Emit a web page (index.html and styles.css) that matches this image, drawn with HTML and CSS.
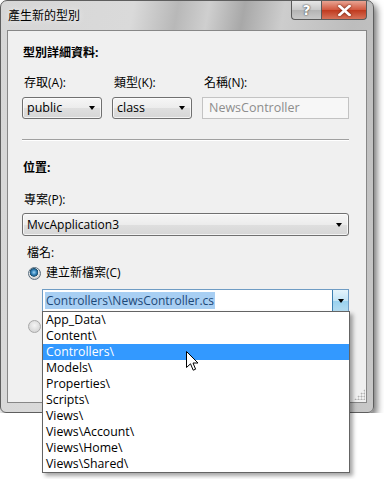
FILE: index.html
```html
<!DOCTYPE html>
<html lang="zh-Hant">
<head>
    <meta charset="UTF-8">
    <title>產生新的型別</title>
    <link rel="stylesheet" href="styles.css">
</head>
<body>
    <div class="window">
        <div class="titlebar">
            <span class="title">產生新的型別</span>
            <div class="caption-buttons">
                <span class="cap-btn help">?</span>
                <span class="cap-btn close">
                    <svg width="13" height="11" viewBox="0 0 13 11"><path d="M1.5 1 L11.5 10 M11.5 1 L1.5 10" stroke="#fff" stroke-width="2.6" stroke-linecap="square"/></svg>
                </span>
            </div>
        </div>

        <div class="client">
            <div class="section-title first">型別詳細資料:</div>
            <div class="field-row">
                <div class="field access">
                    <div class="label">存取(A):</div>
                    <div class="combo">public<i class="arrow"></i></div>
                </div>
                <div class="field kind">
                    <div class="label">類型(K):</div>
                    <div class="combo">class<i class="arrow"></i></div>
                </div>
                <div class="field name">
                    <div class="label">名稱(N):</div>
                    <div class="textbox">NewsController</div>
                </div>
            </div>

            <div class="separator"></div>

            <div class="section-title">位置:</div>
            <div class="label project-label">專案(P):</div>
            <div class="combo wide">MvcApplication3<i class="arrow"></i></div>

            <div class="label file-label">檔名:</div>
            <div class="radio-row">
                <span class="radio checked"></span>
                <span>建立新檔案(C)</span>
            </div>
            <div class="combo-edit">
                <span class="selected-text">Controllers\NewsController.cs</span>
                <span class="drop-btn"><i class="arrow"></i></span>
            </div>
            <div class="radio-row second">
                <span class="radio"></span>
            </div>

            <div class="grip"></div>
        </div>
    </div>

    <ul class="droplist">
        <li>App_Data\</li>
        <li>Content\</li>
        <li class="active">Controllers\</li>
        <li>Models\</li>
        <li>Properties\</li>
        <li>Scripts\</li>
        <li>Views\</li>
        <li>Views\Account\</li>
        <li>Views\Home\</li>
        <li>Views\Shared\</li>
    </ul>

    <svg class="cursor" width="13" height="21" viewBox="0 0 13 21">
        <path d="M0.5 0.5 L0.5 16.5 L4.5 12.8 L7.2 19.2 L9.6 18.2 L7 12 L12 12 Z" fill="#fff" stroke="#000" stroke-width="1" stroke-linejoin="miter"/>
    </svg>
</body>
</html>
```

FILE: styles.css
```css
body {
    margin: 0;
    background: #fff;
    font-family: "Open Sans", "Noto Sans CJK TC", sans-serif;
    font-size: 12px;
    color: #000;
}
.window {
    width: 372px;
    height: 411px;
    border: 1px solid #5e5e5e;
    border-radius: 7px 7px 6px 6px;
    background: linear-gradient(100deg, #d6d6d6 0%, #dadada 30%, #b8b8b8 40%, #cfcfcf 47%, #a8a8a8 55%, #cdcdcd 64%, #bdbdbd 80%, #c8c8c8 100%);
    box-shadow: 3px 4px 7px rgba(0, 0, 0, 0.55);
    display: flex;
    flex-direction: column;
}
.titlebar {
    height: 29px;
    display: flex;
    align-items: flex-start;
}
.title {
    padding-left: 7px;
    line-height: 29px;
    font-size: 12px;
    text-shadow: 0 0 6px rgba(255, 255, 255, 0.9);
}
.caption-buttons {
    margin-left: auto;
    margin-right: 6px;
    display: flex;
}
.cap-btn {
    height: 18px;
    display: flex;
    align-items: center;
    justify-content: center;
    border: 1px solid #5a5a5a;
    border-top: none;
}
.help {
    width: 29px;
    border-radius: 0 0 0 4px;
    border-right: none;
    background: linear-gradient(#e6e6e6, #c8c8c8 50%, #b4b4b4 51%, #c9c9c9);
    color: #fff;
    font-weight: bold;
    font-size: 14px;
    font-family: "DejaVu Sans", sans-serif;
    text-shadow: 0 0 2px #555, 0 0 1px #333;
}
.close {
    width: 44px;
    border-radius: 0 0 4px 0;
    background: linear-gradient(#e8a493, #d2573d 50%, #c0391e 51%, #d6735a);
}
.close svg {
    filter: drop-shadow(0 0 1px #5a1a0a);
}
.client {
    margin: 0 6px;
    height: 371px;
    border: 1px solid #878787;
    background: #f0f0f0;
    padding: 0 17px 0 14px;
    display: flex;
    flex-direction: column;
    line-height: 16px;
}
.section-title {
    font-weight: bold;
    margin: 19px 0 0 1px;
}
.section-title.first {
    margin-top: 14px;
}
.label {
    margin-left: 2px;
}
.field-row {
    display: flex;
    gap: 10px;
    margin-top: 14px;
}
.field .label {
    margin-bottom: 6px;
}
.access, .kind {
    width: 80px;
}
.name {
    flex: 1;
}
.combo {
    height: 20px;
    border: 1px solid #707070;
    border-radius: 3px;
    background: linear-gradient(#f6f6f6, #ececec 50%, #dfdfdf 51%, #d6d6d6);
    box-shadow: inset 0 0 0 1px rgba(255, 255, 255, 0.7);
    display: flex;
    align-items: center;
    justify-content: space-between;
    padding: 0 6px 0 4px;
    font-size: 12.5px;
}
.arrow {
    width: 0;
    height: 0;
    border-left: 3.5px solid transparent;
    border-right: 3.5px solid transparent;
    border-top: 4px solid #000;
}
.textbox {
    height: 20px;
    border: 1px solid #c3c3c3;
    background: #f7f7f7;
    color: #8d8d8d;
    padding-left: 6px;
    line-height: 20px;
    font-size: 12.5px;
}
.separator {
    margin-top: 20px;
    height: 1px;
    background: #a0a0a0;
    border-bottom: 1px solid #fff;
}
.project-label {
    margin-top: 16px;
}
.combo.wide {
    margin-top: 5px;
    height: 21px;
    font-size: 12px;
}
.file-label {
    margin: 9px 0 0 5px;
}
.radio-row {
    display: flex;
    align-items: center;
    gap: 5px;
    margin: 4px 0 0 6px;
}
.radio {
    width: 11px;
    height: 11px;
    border-radius: 50%;
    border: 1px solid #8e8f8f;
    background: radial-gradient(circle at 50% 40%, #ffffff, #d4d4d4);
}
.radio.checked {
    border-color: #5a6f80;
    background: radial-gradient(circle at 45% 40%, #9fd6f4 0, #2f7fb8 2.5px, #1c4f6e 4px, #eaeaea 4.6px, #cfcfcf 6px);
}
.radio-row.second {
    margin-top: 6px;
    height: 16px;
}
.radio-row.second .radio {
    border-color: #a8a8a8;
    background: radial-gradient(circle at 50% 40%, #f4f4f4, #cdcdcd);
}
.combo-edit {
    margin: 8px 0 0 20px;
    height: 21px;
    border: 1px solid #6f9cc4;
    background: #fff;
    display: flex;
    align-items: center;
    padding-left: 2px;
    font-size: 12px;
}
.selected-text {
    background: #a8cff3;
    color: #1d4877;
    line-height: 17px;
    padding: 0 1px;
}
.drop-btn {
    margin-left: auto;
    width: 15px;
    height: 21px;
    border-left: 1px solid #3c7fb1;
    background: linear-gradient(#e5f4fc, #c4e5f6 50%, #98d1ef 51%, #b3dcf1);
    display: flex;
    align-items: center;
    justify-content: center;
}
.grip {
    margin-top: auto;
    align-self: flex-end;
    margin-right: -16px;
    margin-bottom: 2px;
    width: 11px;
    height: 11px;
    background-image: radial-gradient(circle, #b0b0b0 0.9px, transparent 1.1px);
    background-size: 3px 3px;
    clip-path: polygon(100% 0, 100% 100%, 0 100%);
}
.droplist {
    position: absolute;
    left: 42px;
    top: 311px;
    width: 306px;
    margin: 0;
    padding: 0;
    list-style: none;
    background: #fff;
    border: 1px solid #646464;
    box-shadow: 3px 3px 4px rgba(0, 0, 0, 0.35);
    font-size: 12.3px;
}
.droplist li {
    height: 16px;
    line-height: 16px;
    padding-left: 3px;
}
.droplist li.active {
    background: #3399ff;
    color: #fff;
}
.cursor {
    position: absolute;
    left: 186px;
    top: 351px;
}
```
